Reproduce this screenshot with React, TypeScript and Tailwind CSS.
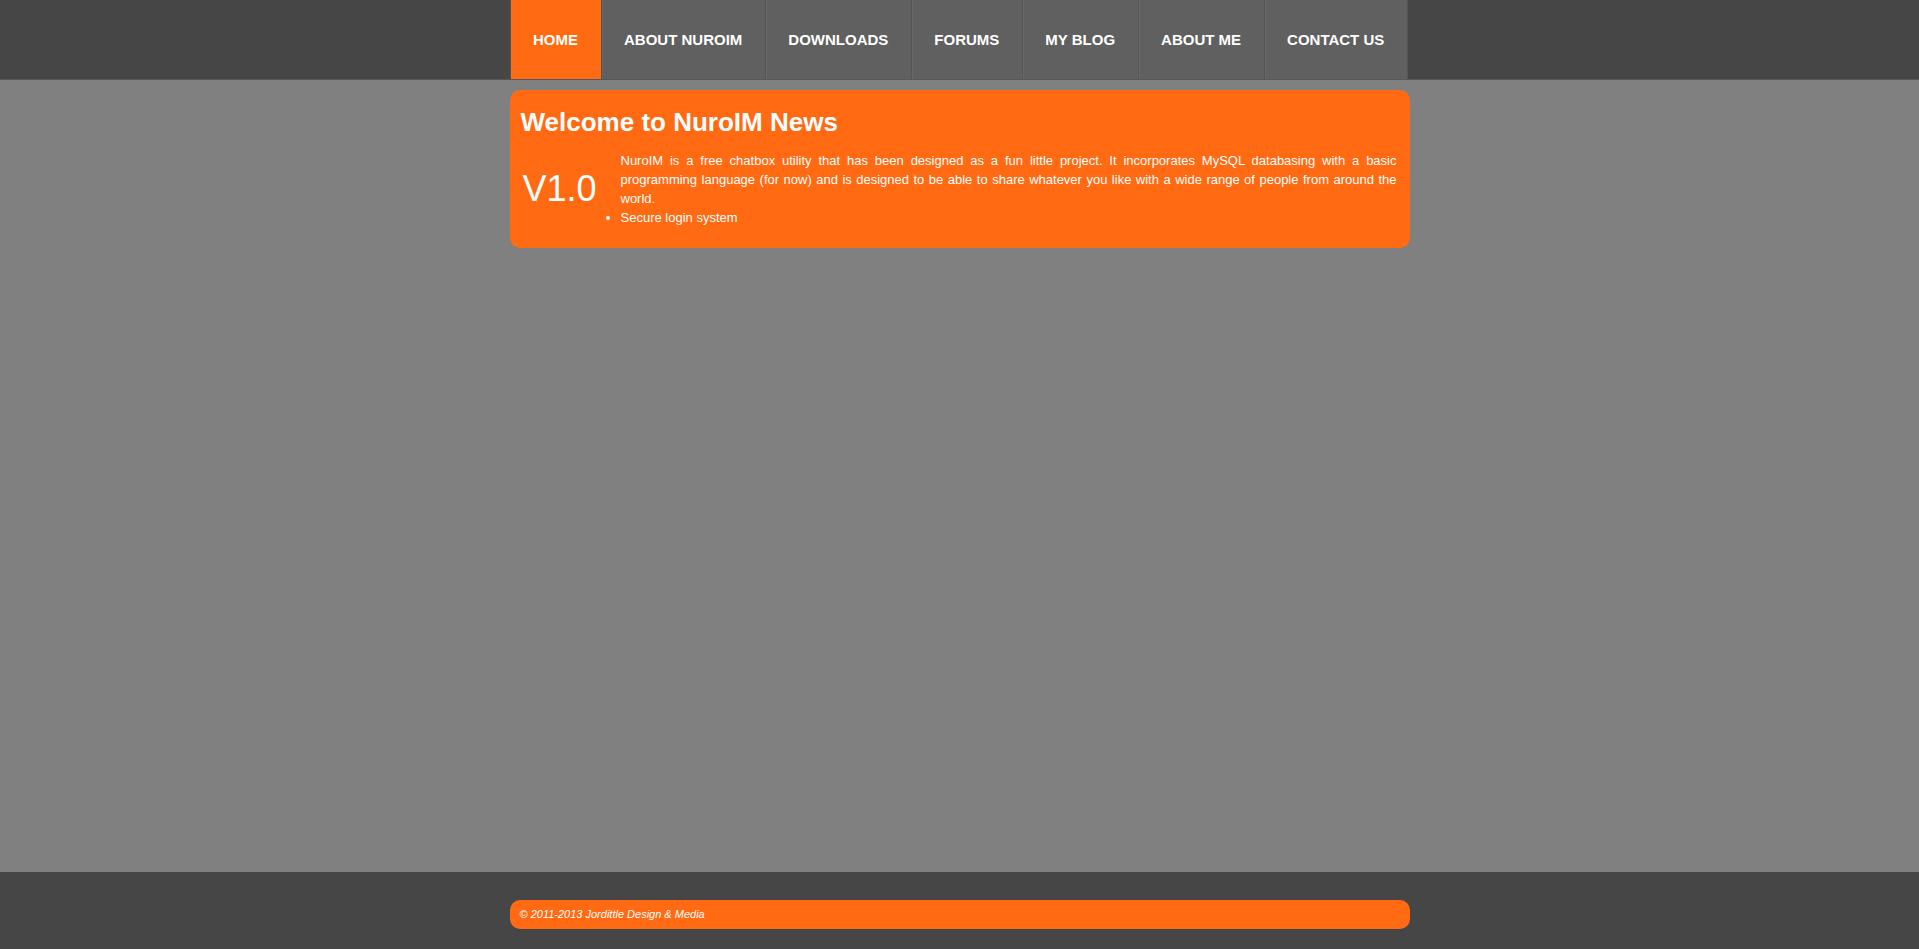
const links = ['Home', 'About NuroIM', 'Downloads', 'Forums', 'My Blog', 'About Me', 'Contact Us']

export default function App() {
  return (
    <div className="flex min-h-screen flex-col bg-[#808080] font-['Liberation_Sans',Arial,sans-serif] text-white">
      <div className="h-[80px] border-b border-[#575757] bg-[#464646]">
        <ul className="mx-auto flex h-[79px] w-[900px]">
          {links.map((l, i) => (
            <li
              key={l}
              className={
                'flex h-full items-center border-l border-[#555] px-[22.5px] pt-[2px] text-[15px] font-bold uppercase ' +
                (i === 0 ? 'bg-[#ff6a12]' : 'bg-[#606060] shadow-[inset_1px_0_0_#686868]')
              }
            >
              {l}
            </li>
          ))}
          <li className="h-full border-l border-[#555]" />
        </ul>
      </div>

      <div className="flex-1">
        <div className="mx-auto mt-[10px] w-[900px] rounded-[10px] bg-[#ff6a12] pt-[17px] pr-[13px] pb-[21px] pl-[11px]">
          <h1 className="text-[26px] font-bold leading-[30px]">Welcome to NuroIM News</h1>
          <div className="mt-[14px] flex items-center">
            <div className="w-[100px] pl-[2px] text-[36px] leading-[40px]">V1.0</div>
            <div className="flex-1 text-[13px] leading-[19px]">
              <p className="text-justify">
                NuroIM is a free chatbox utility that has been designed as a fun little project. It incorporates MySQL
                databasing with a basic programming language (for now) and is designed to be able to share whatever you
                like with a wide range of people from around the world.
              </p>
              <ul className="list-disc">
                <li>Secure login system</li>
              </ul>
            </div>
          </div>
        </div>
      </div>

      <div className="h-[77px] bg-[#464646] pt-[28px]">
        <div className="mx-auto flex h-[29px] w-[900px] items-center rounded-[10px] bg-[#ff6a12] pl-[10px] text-[11px] italic">
          © 2011-2013 Jordittle Design &amp; Media
        </div>
      </div>
    </div>
  )
}
